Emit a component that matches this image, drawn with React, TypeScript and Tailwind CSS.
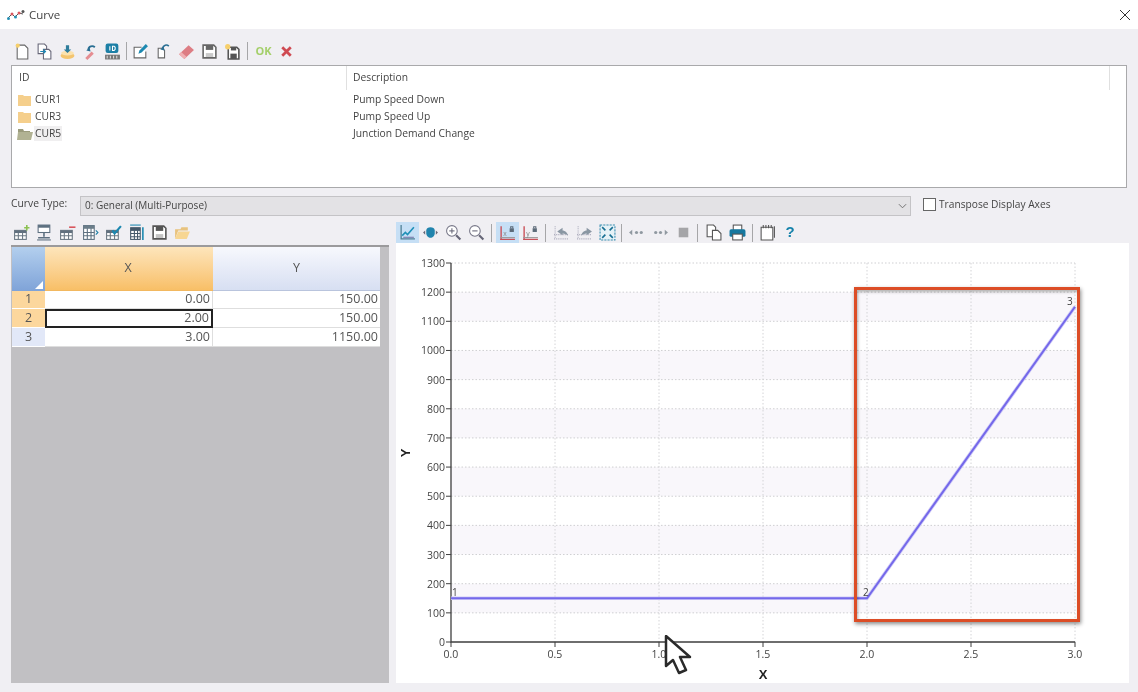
import React from "react";

const ic = "w-[17px] h-[17px] block";
const S = ({ children }: { children: React.ReactNode }) => (
  <svg viewBox="0 0 16 16" className={ic} fill="none">{children}</svg>
);
const Btn = ({ w, on, children }: { w: string; on?: boolean; children: React.ReactNode }) => (
  <div className={`${w} h-[21px] flex items-center justify-center shrink-0 ${on ? "bg-[#c6dff5]" : ""}`}>{children}</div>
);
const Sep = ({ w }: { w: string }) => (
  <div className={`${w} h-[21px] flex items-center justify-center shrink-0`}>
    <div className="w-px h-[18px] bg-[#a6a6a8]" />
  </div>
);

const Doc = () => <S><path d="M3 2h7l3 3v10H3z" fill="#fff" stroke="#666" /><circle cx="3.500" cy="2.500" r="2" fill="#f6cf6c" /></S>;
const Copy = () => <S><path d="M2 1h6l2 2v7H2z" fill="#fff" stroke="#667" /><path d="M7 6h5l2 2v7H7z" fill="#fff" stroke="#667" /><path d="M4 8h5M7 6l2 2-2 2" stroke="#1d87b5" /></S>;
const Imp = () => <S><ellipse cx="8" cy="12" rx="6.500" ry="3" fill="#f4c56f" /><ellipse cx="8" cy="9.500" rx="6" ry="2.200" fill="#fbe2ae" /><path d="M6.500 2h3v4h2L8 9.500 4.500 6h2z" fill="#2f7d9b" /></S>;
const Undo = () => <S><path d="M4 14l6-6 2 2-6 6z" fill="#e58d92" /><path d="M7 6c0-3 4-4 6-2" stroke="#2a6f93" strokeWidth="1.700" /><path d="M5 7l4 1-1-4z" fill="#2a6f93" /></S>;
const Id = () => <S><rect x="1.500" y="0.500" width="12" height="9" rx="2" fill="#1c7fa6" /><path d="M5.500 3v4M8 3v4h1.500l1-1V4l-1-1z" stroke="#fff" /><rect x="1" y="11" width="14" height="4.500" fill="#777" /><path d="M3 12v2.500M6 12v2.500M9 12v2.500M12 12v2.500" stroke="#ddd" /></S>;
const Edit = () => <S><path d="M13 8v6H2V4h7" stroke="#666" fill="#fff" /><path d="M6 10l1-3 6-6 2 2-6 6z" fill="#1c88b0" /></S>;
const Doc2 = () => <S><path d="M2 6h4l2 2v7H2z" fill="#fff" stroke="#666" transform="translate(1 -1)" /><path d="M7 5c1-3 4-4 6-2" stroke="#2a6f93" strokeWidth="1.500" /><path d="M5 6l4 1-1-4z" fill="#2a6f93" /></S>;
const Eraser = () => <S><path d="M1 10.500L10 2l5 4.500-9 8.500z" fill="#dd7d84" /><path d="M1 10.500L6 15l2-2-5-4.500z" fill="#f0b0b3" /></S>;
const Save = ({ c = "#666" }: { c?: string }) => (
  <S><path d="M2 2h10l2 2v10H2z" fill="#fff" stroke={c} strokeWidth="1.500" /><rect x="4.500" y="2.500" width="7" height="4" fill={c} /><rect x="4.500" y="9.500" width="7" height="4.500" fill={c} fillOpacity="0.35" /></S>
);
const SaveStar = () => <S><path d="M4 4h8l2 2v9H4z" fill="#fff" stroke="#555" strokeWidth="1.500" /><rect x="6" y="10" width="6" height="5" fill="#555" /><rect x="6.500" y="4" width="5" height="3" fill="#555" /><circle cx="3.500" cy="3.500" r="2.500" fill="#f6cf6c" /></S>;
const Xmark = () => <S><path d="M4 4l8 8M12 4l-8 8" stroke="#cf4a52" strokeWidth="2.600" /></S>;

const T = ({ c = "#61707e" }: { c?: string }) => <><rect x="1.500" y="6" width="11" height="8.500" fill="#fff" stroke="#6b7883" /><rect x="1.500" y="6" width="11" height="2.500" fill={c} /><path d="M1.500 11h11M5 8.500v6M9 8.500v6" stroke="#6b7883" /></>;
const Grid1 = () => <S><T /><path d="M13 1v5M10.500 3.500h5" stroke="#8cc152" strokeWidth="1.500" /></S>;
const Grid2 = () => <S><rect x="2" y="1" width="11" height="7" fill="#fff" stroke="#5d7080" /><rect x="2" y="1" width="11" height="2.500" fill="#5d7080" /><path d="M7.500 8v4M2 13h11" stroke="#5d7080" strokeWidth="1.500" /><path d="M1 15h13" stroke="#5d7080" /></S>;
const Grid3 = () => <S><T /><path d="M9.500 3h6" stroke="#d8565d" strokeWidth="1.500" /></S>;
const Grid4 = () => <S><rect x="1.500" y="1.500" width="10" height="13" fill="#fff" stroke="#5d7080" /><rect x="1.500" y="1.500" width="10" height="3" fill="#6b7d89" /><path d="M1.500 8h10M1.500 11h10M5 4v10M8.500 4v10" stroke="#5d7080" /><path d="M13 6l2 2-2 2" stroke="#1c7fa6" /></S>;
const Grid5 = () => <S><T /><path d="M7 6l2 3 6-7" stroke="#1c88b0" strokeWidth="2" /></S>;
const Grid6 = () => <S><rect x="2.500" y="3.500" width="9" height="11" fill="#fff" stroke="#44586a" /><rect x="2.500" y="3.500" width="9" height="3" fill="#44586a" /><path d="M2.500 9h9M2.500 12h9M6 6v8M9 6v8" stroke="#44586a" /><path d="M2 1h10" stroke="#1c88b0" /><path d="M14 3v12" stroke="#1c88b0" strokeWidth="1.500" /></S>;
const Folder = () => <S><path d="M1 5h5l1-2h6v3H4L1 14z" fill="#e8c37e" /><path d="M1 14l3-7h11l-3 7z" fill="#f7d692" /></S>;

const ChartI = () => <S><path d="M2 1v13h13" stroke="#4f7f95" strokeWidth="1.200" /><path d="M3 11l3-3 2 2 6-7" stroke="#2090b8" strokeWidth="1.500" /><path d="M4 12.500h10" stroke="#77a" /></S>;
const Hand = () => <S><path d="M1 8l2-2v4zM15 8l-2-2v4z" fill="#667" /><path d="M4 6c0-2 2-3 4-3s4 1 4 3v3c0 2-2 4-4 4s-4-2-4-4z" fill="#2184ad" /></S>;
const Zoom = ({ minus }: { minus?: boolean }) => <S><circle cx="6.500" cy="6.500" r="5" fill="#fff" stroke="#778" /><path d="M4 6.500h5" stroke="#667" />{!minus && <path d="M6.500 4v5" stroke="#667" />}<path d="M10.500 10.500l4 4" stroke="#667" strokeWidth="2" /></S>;
const Lock = ({ l, c }: { l: string; c: string }) => <S><path d="M1 14.500h14M2 2v13" stroke={c} strokeWidth="1.300" /><path d="M1 12.800h14" stroke="#999" /><rect x="10" y="4" width="4" height="3.500" fill="#5b6a78" /><path d="M11 4V2.500h2V4" stroke="#5b6a78" /><text x="4" y="11.500" fontSize="6.500" fill="#888" fontFamily="Liberation Sans, sans-serif">{l}</text></S>;
const Back = ({ flip }: { flip?: boolean }) => <S><path d="M2 2v12M1 14h14M1 10h14" stroke="#aab" strokeDasharray="1 1" /><path d={flip ? "M5 11c0-3 3-5 5-5V3.500L15 7l-5 3.500V9c-2 0-4 1-5 2z" : "M14 11c0-3-3-5-5-5V3.500L4 7l5 3.500V9c2 0 4 1 5 2z"} fill="#8a97a3" /></S>;
const Fit = () => <S><rect x="1" y="1" width="14" height="14" stroke="#3a8fb0" strokeDasharray="2 1" fill="#e6f2f7" /><path d="M3 3l3 3M13 3l-3 3M3 13l3-3M13 13l-3-3" stroke="#176f93" strokeWidth="1.500" /></S>;
const Pt = ({ flip }: { flip?: boolean }) => <S>{flip ? <><circle cx="3.500" cy="8" r="1.500" fill="#8f98a0" /><circle cx="8" cy="8" r="1.500" fill="#8f98a0" /><path d="M12 5.500L15 8l-3 2.500z" fill="#8f98a0" /></> : <><path d="M4 5.500L1 8l3 2.500z" fill="#8f98a0" /><circle cx="8" cy="8" r="1.500" fill="#8f98a0" /><circle cx="12.500" cy="8" r="1.500" fill="#8f98a0" /></>}</S>;
const Stop = () => <S><rect x="3.500" y="3.500" width="9" height="9" fill="#a5a5a8" /></S>;
const Copy2 = () => <S><path d="M2 1h6l2 2v9H2z" fill="#fff" stroke="#555" /><path d="M7 6h5l3 3v6H7z" fill="#fff" stroke="#555" /></S>;
const Print = () => <S><rect x="4" y="1" width="8" height="5" fill="#fff" stroke="#555" /><rect x="0.500" y="5" width="15" height="7" rx="1.500" fill="#17789f" /><rect x="3.500" y="9.500" width="9" height="5.500" fill="#fff" stroke="#555" /></S>;
const Note = () => <S><path d="M2 3h11v12H2z" fill="#fff" stroke="#555" /><path d="M14.500 2v11" stroke="#555" /><path d="M4 1v3M6.500 1v3M9 1v3M11.500 1v3" stroke="#555" /></S>;

const top = [Doc, Copy, Imp, Undo, Id];
const top2 = [Edit, Doc2, Eraser];
const gridIcons = [Grid1, Grid2, Grid3, Grid4, Grid5, Grid6];

const rows = [
  { id: "CUR1", d: "Pump Speed Down" },
  { id: "CUR3", d: "Pump Speed Up" },
  { id: "CUR5", d: "Junction Demand Change" },
];
const data = [
  ["1", "0.00", "150.00"],
  ["2", "2.00", "150.00"],
  ["3", "3.00", "1150.00"],
];

const fx = (v: number) => 451 + (v / 3) * 624;
const fy = (v: number) => 642 - (v / 1300) * 379;
const ys = Array.from({ length: 14 }, (_, i) => i * 100);
const xs = [0, 0.5, 1, 1.5, 2, 2.5, 3];

const Chart = () => (
  <svg viewBox="396 243 733 440" className="w-full h-full block" fontFamily="'Open Sans', sans-serif">
    {[100, 300, 500, 700, 900, 1100].map((v) => (
      <rect key={v} x={451} width={624} y={fy(v + 100)} height={fy(v) - fy(v + 100)} fill="#f9f7fb" />
    ))}
    {ys.slice(1).map((v) => (
      <line key={v} x1={451} x2={1075} y1={fy(v)} y2={fy(v)} stroke="#cfcfd2" strokeDasharray="1.500 2" />
    ))}
    {xs.slice(1).map((v) => (
      <line key={v} x1={fx(v)} x2={fx(v)} y1={263} y2={642} stroke="#d4d4d7" strokeDasharray="1.500 2" />
    ))}
    <path d="M451 263V642H1075" stroke="#3f3f3f" strokeWidth="1.300" fill="none" />
    {ys.map((v) => (
      <g key={v}>
        <line x1={446} x2={451} y1={fy(v)} y2={fy(v)} stroke="#3f3f3f" />
        <text x={445} y={fy(v) + 4} textAnchor="end" fontSize="10.500" fill="#444">{v}</text>
      </g>
    ))}
    {xs.map((v) => (
      <g key={v}>
        <line x1={fx(v)} x2={fx(v)} y1={642} y2={647} stroke="#3f3f3f" />
        <text x={fx(v)} y={658} textAnchor="middle" fontSize="10.500" fill="#444">{v.toFixed(1)}</text>
      </g>
    ))}
    <polyline points={`${fx(0)},${fy(150)} ${fx(2)},${fy(150)} ${fx(3)},${fy(1150)}`} stroke="#cfcbf7" strokeWidth="3.600" fill="none" />
    <polyline points={`${fx(0)},${fy(150)} ${fx(2)},${fy(150)} ${fx(3)},${fy(1150)}`} stroke="#7468ea" strokeWidth="2" fill="none" />
    <text x={452} y={596} fontSize="10" fill="#444">1</text>
    <text x={863} y={596} fontSize="10" fill="#444">2</text>
    <text x={1067} y={305} fontSize="10" fill="#444">3</text>
    <text x={763} y={679} textAnchor="middle" fontSize="13" fontWeight="700" fill="#222" fontFamily="'Liberation Sans', sans-serif">X</text>
    <text transform="translate(410 453) rotate(-90)" textAnchor="middle" fontSize="13" fontWeight="700" fill="#222" fontFamily="'Liberation Sans', sans-serif">Y</text>
  </svg>
);

export default function App() {
  return (
    <div className="w-[1138px] h-[692px] relative overflow-hidden bg-[#f0eff3] flex flex-col font-['Open_Sans',sans-serif] text-[10.300px] text-[#444] blur-[0.35px]">
      {/* Title bar */}
      <div className="h-[29px] bg-white flex items-center pl-[7px] pr-[8px] shrink-0">
        <svg viewBox="0 0 18 12" className="w-[18px] h-[12px]" fill="none">
          <path d="M1 9l4-4 3 3 4-4 4 1" stroke="#555" />
          <circle cx="1.500" cy="9.500" r="1.500" fill="#2590b5" /><circle cx="5" cy="5" r="1.500" fill="#d9565d" /><circle cx="8.500" cy="8" r="1.500" fill="#2590b5" /><circle cx="12" cy="4" r="1.500" fill="#d9565d" /><circle cx="16" cy="2.500" r="1.500" fill="#555" />
        </svg>
        <span className="ml-[4px] text-[11.500px] text-[#444]">Curve</span>
        <svg viewBox="0 0 10 10" className="w-[10px] h-[10px] ml-auto" stroke="#333" fill="none"><path d="M0 0l10 10M10 0L0 10" /></svg>
      </div>

      {/* Main toolbar */}
      <div className="h-[36px] pl-[11px] pt-[8px] flex items-center shrink-0">
        {top.map((I, i) => <Btn key={i} w="w-[22.500px]"><I /></Btn>)}
        <Sep w="w-[5px]" />
        {top2.map((I, i) => <Btn key={i} w="w-[23px]"><I /></Btn>)}
        <Btn w="w-[23px]"><Save /></Btn>
        <Btn w="w-[23px]"><SaveStar /></Btn>
        <Sep w="w-[7px]" />
        <span className="w-[26px] text-center text-[11px] font-bold text-[#a4cf6a]">OK</span>
        <Btn w="w-[20px]"><Xmark /></Btn>
      </div>

      {/* List */}
      <div className="mx-[11px] h-[123px] bg-white border border-[#a9a9ab] shrink-0">
        <div className="h-[24px] flex items-center">
          <div className="w-[335px] pl-[7px] h-full flex items-center border-r border-[#e0e0e0]">ID</div>
          <div className="w-[763px] pl-[6px] h-full flex items-center border-r border-[#e0e0e0]">Description</div>
        </div>
        <div className="pt-[1px]">
          {rows.map((r, i) => (
            <div key={r.id} className="h-[17px] flex items-center">
              <div className="w-[336px] pl-[5px] flex items-center">
                <svg viewBox="0 0 16 12" className="w-[16px] h-[12px]">
                  {i === 2 ? <>
                    <path d="M1 1h5l1 2h6v2H1z" fill="#9a9b7c" /><path d="M0 12l1-8h15l-2 8z" fill="#b1b293" />
                  </> : <path d="M1 1h5l1 1h7v10H1z" fill="#f5cf8c" />}
                </svg>
                <span className={`ml-[1px] px-[1px] ${i === 2 ? "bg-[#f0eff0]" : ""}`}>{r.id}</span>
              </div>
              <div className="pl-[5px]">{r.d}</div>
            </div>
          ))}
        </div>
      </div>

      {/* Curve type */}
      <div className="h-[20px] mt-[8px] pl-[11px] flex items-center shrink-0">
        <span className="w-[69px] -mt-[5px]">Curve Type:</span>
        <div className="w-[831px] h-[20px] bg-[#e3e2e5] border border-[#c4c3c6] flex items-center pl-[4px] pr-[3px]">
          <span className="text-[10px] -mt-px">0: General (Multi-Purpose)</span>
          <svg viewBox="0 0 10 6" className="w-[9px] h-[6px] ml-auto" fill="none" stroke="#666"><path d="M1 1l4 4 4-4" /></svg>
        </div>
        <div className="w-[13px] h-[13px] ml-[12px] -mt-[3px] bg-white border border-[#666]" />
        <span className="ml-[3px] -mt-[3px] text-[10.200px]">Transpose Display Axes</span>
      </div>

      {/* Bottom */}
      <div className="flex-1 min-h-0 flex pl-[11px] pr-[9px] pb-[9px] pt-[6px]">
        <div className="w-[378px] flex flex-col shrink-0">
          <div className="h-[21px] flex items-center -ml-[1px]">
            {gridIcons.map((I, i) => <Btn key={i} w="w-[23px]"><I /></Btn>)}
            <Btn w="w-[23px]"><Save c="#555" /></Btn>
            <Btn w="w-[23px]"><Folder /></Btn>
          </div>
          <div className="flex-1 mt-[2px] bg-[#c1c0c3] border-t-2 border-[#9b9a9c] pl-px">
            <div className="grid grid-cols-[33px_168px_167px] grid-rows-[44px_18px_19px_19px] text-[12.500px] text-[#555]">
              <div className="bg-gradient-to-b from-[#b3cfee] to-[#7fa3d8] relative">
                <div className="absolute right-[2px] bottom-[2px] w-0 h-0 border-l-[8px] border-l-transparent border-b-[8px] border-b-white" />
              </div>
              <div className="bg-gradient-to-b from-[#fde5bb] to-[#f8bf66] flex items-center justify-center border-b border-[#f2b860] pr-[2px]">X</div>
              <div className="bg-gradient-to-b from-[#f7f8fd] to-[#d7dff2] flex items-center justify-center border-b border-[#b9c4dd]">Y</div>
              {data.map((r, i) => (
                <React.Fragment key={r[0]}>
                  <div className={`flex items-center justify-center border-b border-white ${i < 2 ? "bg-[#fcd79d]" : "bg-[#e2e8f8]"}`}>{r[0]}</div>
                  <div className={`bg-white flex items-center justify-end pr-[2px] ${i === 1 ? "border-2 border-[#222]" : "border-b border-r border-[#dedede]"}`}>{r[1]}</div>
                  <div className="bg-white flex items-center justify-end pr-[2px] border-b border-[#dedede]">{r[2]}</div>
                </React.Fragment>
              ))}
            </div>
          </div>
        </div>

        <div className="ml-[7px] flex-1 flex flex-col min-w-0">
          <div className="h-[21px] flex items-center">
            <Btn w="w-[23px]" on><ChartI /></Btn>
            <Btn w="w-[23px]"><Hand /></Btn>
            <Btn w="w-[23px]"><Zoom /></Btn>
            <Btn w="w-[22px]"><Zoom minus /></Btn>
            <Sep w="w-[9px]" />
            <Btn w="w-[23px]" on><Lock l="x" c="#c95058" /></Btn>
            <Btn w="w-[23px]"><Lock l="y" c="#c95058" /></Btn>
            <Sep w="w-[7.500px]" />
            <Btn w="w-[23px]"><Back /></Btn>
            <Btn w="w-[23px]"><Back flip /></Btn>
            <Btn w="w-[23px]"><Fit /></Btn>
            <Sep w="w-[5.500px]" />
            <Btn w="w-[24px]"><Pt /></Btn>
            <Btn w="w-[24px]"><Pt flip /></Btn>
            <Btn w="w-[22px]"><Stop /></Btn>
            <Sep w="w-[7px]" />
            <Btn w="w-[24px]"><Copy2 /></Btn>
            <Btn w="w-[24px]"><Print /></Btn>
            <Sep w="w-[6.500px]" />
            <Btn w="w-[23px]"><Note /></Btn>
            <Btn w="w-[23px]"><span className="text-[15px] font-bold text-[#1582ab] font-['Liberation_Sans',sans-serif]">?</span></Btn>
          </div>
          <div className="flex-1 min-h-0 bg-white relative">
            <Chart />
            <div className="absolute left-[458px] top-[44px] w-[226px] h-[335px] border-[3px] border-[#dc4d26] shadow-[1px_2px_4px_rgba(0,0,0,0.45),inset_1px_2px_3px_rgba(0,0,0,0.3)]" />
          </div>
        </div>
      </div>

      {/* Cursor */}
      <svg viewBox="0 0 30 44" className="absolute left-[664px] top-[635px] w-[30px] h-[44px]">
        <path d="M2 1v30l7-6 6 13 7-3-6-13h10z" fill="#fff" stroke="#2a2a2a" strokeWidth="2.500" strokeLinejoin="round" />
      </svg>
    </div>
  );
}
